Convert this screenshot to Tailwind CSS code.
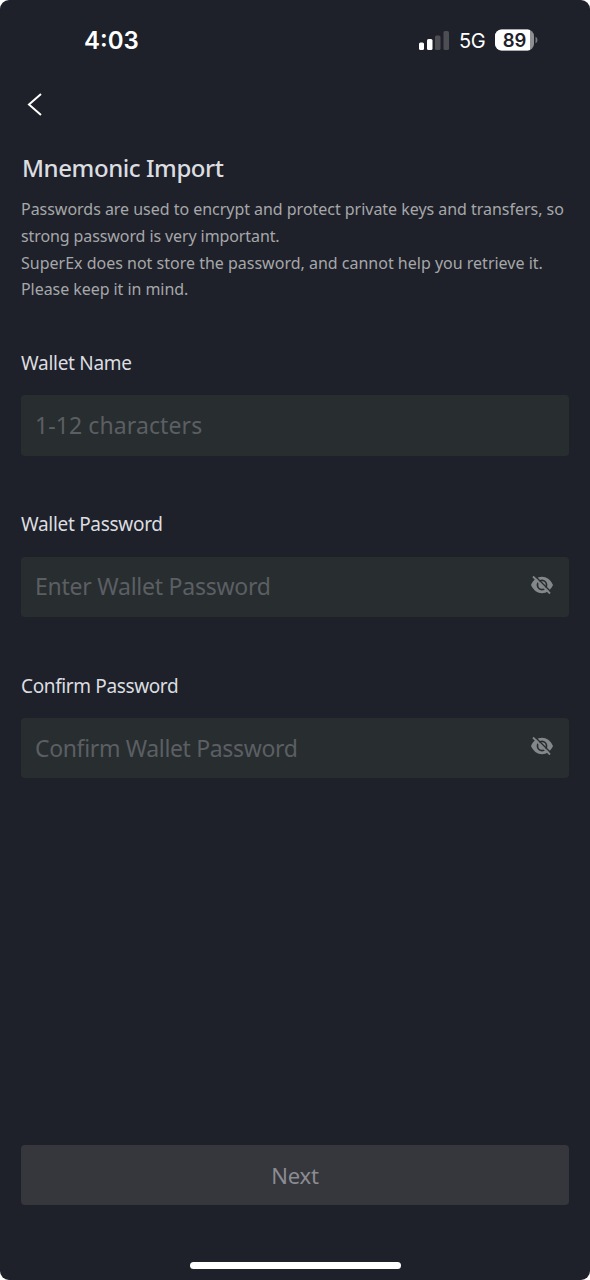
<!DOCTYPE html>
<html lang="en">
<head>
<meta charset="utf-8">
<title>Mnemonic Import</title>
<script src="https://cdn.jsdelivr.net/npm/@tailwindcss/browser@4"></script>
</head>
<body class="bg-white">
<main class="flex h-[1280px] w-[590px] flex-col overflow-hidden rounded-[9px] bg-[#1e2129] font-['Noto_Sans',sans-serif] text-[#dcdde0]">
  <header class="flex h-[81px] shrink-0 items-center justify-between pr-[51px] pl-[84px] text-white">
    <span class="pt-px font-['Inter',sans-serif] text-[24px] leading-8 font-semibold">4:03</span>
    <div class="flex items-center">
      <svg class="h-5 w-[30px]" viewBox="0 0 30 20">
        <rect x="0" y="11.500" width="5" height="7.500" rx="1.500" fill="#fff"/>
        <rect x="8" y="8" width="5.500" height="11" rx="1.500" fill="#fff"/>
        <rect x="16" y="4.500" width="5.500" height="14.500" rx="1.500" fill="#4c4e54"/>
        <rect x="24.500" y="0" width="5.500" height="19" rx="1.500" fill="#4c4e54"/>
      </svg>
      <span class="ml-[10px] w-[27px] pt-px font-['Inter',sans-serif] text-[20px] leading-8 tracking-[-0.5px]">5G</span>
      <svg class="mb-[1px] ml-[9px] h-[22px] w-[44px]" viewBox="0 0 44 22">
        <defs><clipPath id="cell"><rect width="39" height="21" y="0.5" rx="6.5"/></clipPath></defs>
        <g clip-path="url(#cell)"><rect width="39" height="22" fill="#8d8f93"/><rect width="35" height="22" fill="#fff"/></g>
        <path d="M40.500 7.500q2 1.200 2 3.500t-2 3.500z" fill="#77797e"/>
        <text x="19.500" y="17.500" text-anchor="middle" font-family="Inter, sans-serif" font-size="18.500" font-weight="600" fill="#1e2129">89</text>
      </svg>
    </div>
  </header>
  <nav class="flex h-[47px] shrink-0 items-center pl-[27px]">
    <svg class="h-6 w-4" viewBox="0 0 16 24" fill="none" stroke="#fff" stroke-width="2"><path d="M14 1 2 11.500l12 10.500"/></svg>
  </nav>
  <section class="flex flex-col px-[21px] pt-[24px]">
    <h1 class="pl-[1px] text-[24px] leading-8 font-medium tracking-[-0.42px]">Mnemonic Import</h1>
    <p class="mt-[12px] text-[16px] leading-[26.800px] tracking-[-0.03px] whitespace-nowrap text-[#a6a7aa]">Passwords are used to encrypt and protect private keys and transfers, so<br><span class="tracking-[-0.1px]">strong password is very important.</span><br><span class="tracking-[0px]">SuperEx does not store the password, and cannot help you retrieve it.</span><br><span class="tracking-[-0.06px]">Please keep it in mind.</span></p>
  </section>
  <form class="flex flex-1 flex-col px-[21px] pt-[46px]">
    <label class="text-[19px] leading-7 tracking-[-0.28px]">Wallet Name</label>
    <div class="mt-[18px] flex h-[61px] items-center rounded-[4px] bg-[#282d30] px-[14px] text-[23px] tracking-[0.1px] text-[#5b5f63]">1-12 characters</div>
    <label class="mt-[54px] text-[19px] leading-7 tracking-[-0.3px]">Wallet Password</label>
    <div class="mt-[19px] flex h-[60px] items-center justify-between rounded-[4px] bg-[#282d30] pr-[15px] pb-px pl-[14px] text-[23px] tracking-[-0.24px] text-[#5b5f63]"><span>Enter Wallet Password</span>
      <svg class="mb-1 h-[22px] w-6" viewBox="0 0 24 22"><path fill="#85888b" fill-rule="evenodd" d="M1 11C3.500 5.500 7.500 2.800 12 2.800s8.500 2.700 11 8.200c-2.500 5.500-6.500 8.200-11 8.200S3.500 16.500 1 11Zm5.600 0a5.400 5.400 0 1 0 10.800 0 5.400 5.400 0 0 0-10.800 0Z"/><circle cx="12" cy="11" r="3.700" fill="#85888b"/><path d="M4.500 1.500 21.500 18.500" stroke="#282d30" stroke-width="1.600"/><path d="M3 2.500 20 19.500" stroke="#85888b" stroke-width="1.800"/></svg>
    </div>
    <label class="mt-[55px] text-[19px] leading-7 tracking-[-0.37px]">Confirm Password</label>
    <div class="mt-[18px] flex h-[60px] items-center justify-between rounded-[4px] bg-[#282d30] pr-[15px] pl-[14px] text-[23px] tracking-[-0.35px] text-[#5b5f63]"><span>Confirm Wallet Password</span>
      <svg class="mb-1 h-[22px] w-6" viewBox="0 0 24 22"><path fill="#85888b" fill-rule="evenodd" d="M1 11C3.500 5.500 7.500 2.800 12 2.800s8.500 2.700 11 8.200c-2.500 5.500-6.500 8.200-11 8.200S3.500 16.500 1 11Zm5.600 0a5.400 5.400 0 1 0 10.800 0 5.400 5.400 0 0 0-10.800 0Z"/><circle cx="12" cy="11" r="3.700" fill="#85888b"/><path d="M4.500 1.500 21.500 18.500" stroke="#282d30" stroke-width="1.600"/><path d="M3 2.500 20 19.500" stroke="#85888b" stroke-width="1.800"/></svg>
    </div>
    <button type="button" class="mt-auto h-[60px] shrink-0 rounded-[4px] bg-[#35373d] text-[22px] tracking-[-0.2px] text-[#8b8c90]">Next</button>
  </form>
  <footer class="flex h-[75px] shrink-0 items-end justify-center pb-[11px]">
    <div class="h-[7px] w-[211px] rounded-full bg-white"></div>
  </footer>
</main>
</body>
</html>
